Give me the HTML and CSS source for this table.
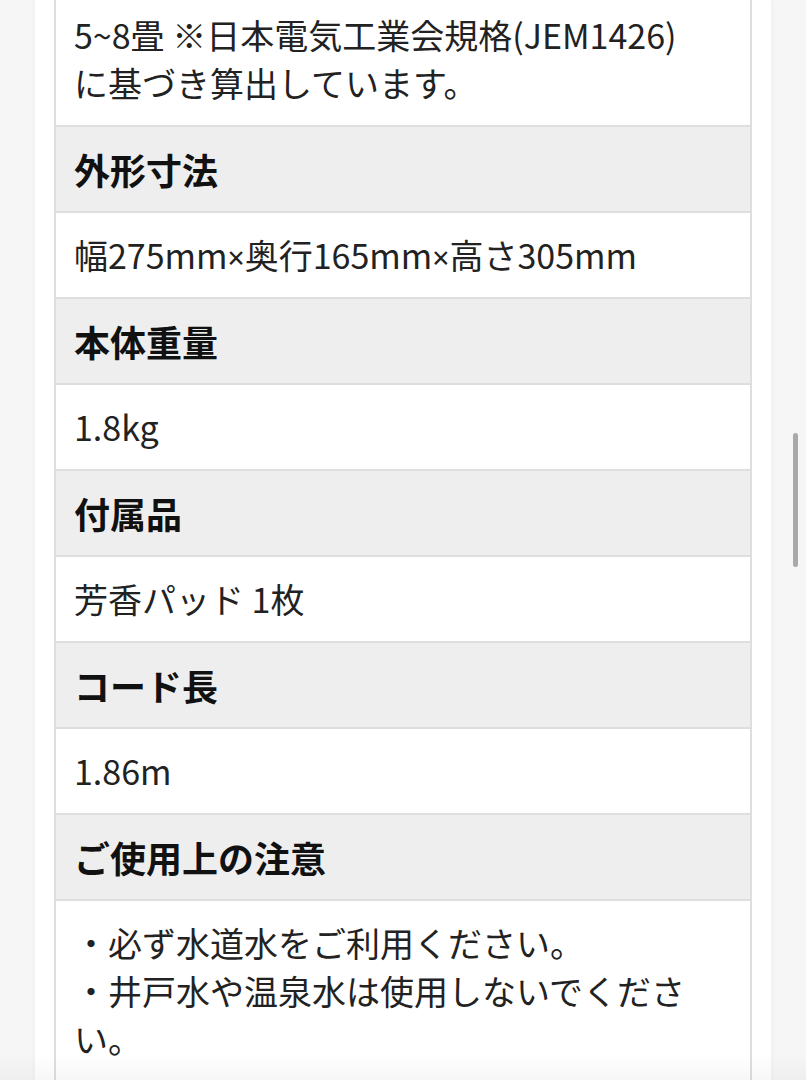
FILE: index.html
```html
<!DOCTYPE html>
<html lang="ja">
<head>
<meta charset="utf-8">
<title>仕様</title>
<link rel="stylesheet" href="styles.css">
</head>
<body>
<div class="page">
  <div class="card">
    <div class="spec">
      <div class="row val">5~8畳 ※日本電気工業会規格(JEM1426)<br>に基づき算出しています。</div>
      <div class="row head">外形寸法</div>
      <div class="row val">幅275mm<span class="x">×</span>奥行165mm<span class="x">×</span>高さ305mm</div>
      <div class="row head">本体重量</div>
      <div class="row val">1.8kg</div>
      <div class="row head">付属品</div>
      <div class="row val">芳香パッド 1枚</div>
      <div class="row head">コード長</div>
      <div class="row val">1.86m</div>
      <div class="row head">ご使用上の注意</div>
      <div class="row val">・必ず水道水をご利用ください。<br>・井戸水や温泉水は使用しないでください。</div>
    </div>
  </div>
</div>
<div class="scrollbar"></div>
<div class="fade"></div>
</body>
</html>
```
FILE: styles.css
```css
html, body {
  margin: 0;
  padding: 0;
  height: 100%;
  overflow: hidden;
}
body {
  background: #f6f6f6;
  font-family: "Noto Sans CJK JP", "Noto Sans", sans-serif;
  color: #1a1a1a;
}
.page {
  height: 100%;
  padding: 0 35px;
  box-sizing: border-box;
}
.card {
  display: flow-root;
  background: #ffffff;
  height: 100%;
  padding: 0 19px;
  box-shadow: 0 0 6px rgba(0, 0, 0, 0.04);
}
.spec {
  margin-top: -9px;
  border: 2px solid #dedede;
  border-bottom: none;
}
.row {
  border-bottom: 2px solid #dedede;
  padding: 18px 18px;
  line-height: 48px;
}
.val {
  background: #ffffff;
  font-size: 34px;
  font-weight: 400;
  color: #222222;
}
.x {
  font-family: "Noto Sans", "DejaVu Sans", sans-serif;
  font-size: 30px;
  line-height: 0;
}
.head {
  background: #eeeeee;
  font-size: 36px;
  font-weight: 700;
  color: #111111;
}
.scrollbar {
  position: absolute;
  left: 793px;
  top: 433px;
  width: 5px;
  height: 134px;
  border-radius: 3px;
  background: #a9a9a9;
}
.fade {
  position: absolute;
  left: 0;
  right: 0;
  bottom: 0;
  height: 26px;
  background: linear-gradient(to bottom, rgba(0,0,0,0), rgba(0,0,0,0.03));
  pointer-events: none;
}
```
